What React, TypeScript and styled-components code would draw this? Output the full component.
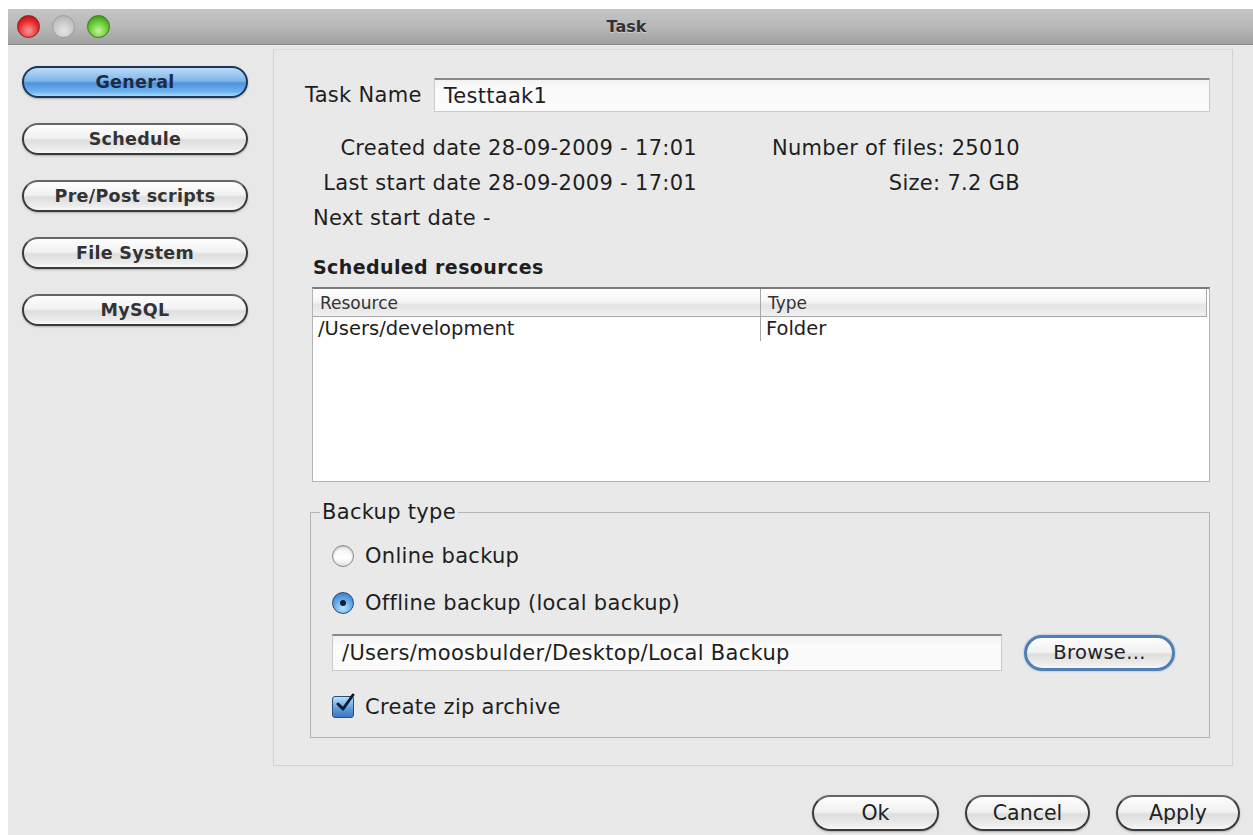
import React from "react"
import styled, {createGlobalStyle, css} from "styled-components";

const GlobalStyle = createGlobalStyle`
  html, body {
    margin: 0;
    padding: 0;
    background: #ffffff;
  }
  body {
    font-family: "DejaVu Sans", "Liberation Sans", sans-serif;
    color: #1e1e1e;
  }
`

const StyledPage = styled.div`
  width: 1253px;
  height: 835px;
  padding: 9px 0 0 8px;
  box-sizing: border-box;
  overflow: hidden;
`

const StyledWindow = styled.div`
  width: 1245px;
  height: 826px;
  display: flex;
  flex-direction: column;
  background: #e8e8e8;
`

const StyledTitleBar = styled.div`
  height: 35px;
  flex-shrink: 0;
  display: flex;
  align-items: center;
  background: linear-gradient(#c6c6c6, #b6b6b6 55%, #a0a0a0);
  border-bottom: 1px solid #8c8c8c;
  position: relative;
`

const StyledLights = styled.div`
  display: flex;
  gap: 12px;
  padding-left: 9px;
`

const StyledLight = styled.span<{color: "red" | "grey" | "green"}>`
  width: 23px;
  height: 23px;
  border-radius: 50%;
  box-sizing: border-box;
  ${({color}) => color === "red" && css`
    background: radial-gradient(circle at 50% 70%, #ff9a9a, #e8282a 55%, #a50d0f);
    border: 1px solid #8e1c1c;
  `}
  ${({color}) => color === "grey" && css`
    background: radial-gradient(circle at 50% 70%, #e6e6e6, #c6c6c6 55%, #a8a8a8);
    border: 1px solid #9e9e9e;
  `}
  ${({color}) => color === "green" && css`
    background: radial-gradient(circle at 50% 70%, #c6f59a, #5fc62a 55%, #2f7a0e);
    border: 1px solid #3a7a1c;
  `}
`

const StyledTitle = styled.div`
  position: absolute;
  inset: 0;
  display: flex;
  align-items: center;
  justify-content: center;
  padding-right: 8px;
  font-size: 16px;
  font-weight: bold;
  color: #333;
  text-shadow: 0 1px 0 rgba(255, 255, 255, 0.4);
  pointer-events: none;
`

const StyledBody = styled.div`
  flex: 1;
  display: flex;
`

const StyledSidebar = styled.div`
  width: 265px;
  flex-shrink: 0;
  display: flex;
  flex-direction: column;
  gap: 25px;
  padding: 21px 0 0 14px;
  box-sizing: border-box;
`

const pill = css`
  display: flex;
  align-items: center;
  justify-content: center;
  box-sizing: border-box;
  border-radius: 999px;
  border: 2px solid #3a3a3a;
  border-top-color: #666;
  background: linear-gradient(#fdfdfd, #f2f2f2 45%, #dedede 55%, #ececec 85%, #f8f8f8);
  box-shadow: 0 1px 2px rgba(0, 0, 0, 0.25);
  font-family: "DejaVu Sans", "Liberation Sans", sans-serif;
  color: #222;
  padding: 0;
`

const StyledNavButton = styled.button<{selected?: boolean}>`
  ${pill};
  width: 226px;
  height: 32px;
  font-size: 17.5px;
  font-weight: bold;
  color: #333;
  letter-spacing: 0.3px;
  ${({selected}) => selected && css`
    border-color: #1d3656;
    background: linear-gradient(#bcdcf8, #7fb6ea 45%, #4c93dc 55%, #6fb3f0 85%, #a9dcff);
    color: #1c2c44;
  `}
`

const StyledRight = styled.div`
  flex: 1;
  display: flex;
  flex-direction: column;
`

const StyledPanel = styled.div`
  margin-top: 4px;
  width: 960px;
  height: 717px;
  box-sizing: border-box;
  border: 1px solid #d2d2d2;
  border-top-color: #dadada;
  background: #e9e9e9;
  padding: 28px 22px 0 31px;
  display: flex;
  flex-direction: column;
  font-size: 21px;
  letter-spacing: 0.3px;
  line-height: 24px;
`

const StyledLabel = styled.span`
  white-space: nowrap;
`

const StyledNameRow = styled.div`
  display: flex;
  align-items: center;
  gap: 12px;
`

const StyledTextField = styled.div<{width?: number, height?: number}>`
  flex: 1;
  height: ${({height}) => height ?? 34}px;
  box-sizing: border-box;
  display: flex;
  align-items: center;
  padding-left: 9px;
  background: linear-gradient(#f2f2f2, #fbfbfb 30%, #fbfbfb);
  border: 1px solid #cacaca;
  border-top: 2px solid #8a8a8a;
  white-space: nowrap;
  ${({width}) => width !== undefined && css`
    flex: none;
    width: ${width}px;
  `}
`

const StyledInfo = styled.div`
  display: grid;
  grid-template-columns: 384px 323px;
  row-gap: 11px;
  margin-top: 24px;
  padding-left: 8px;
`

const StyledInfoCell = styled.div<{align?: "left" | "right"}>`
  text-align: ${({align}) => align ?? "right"};
  white-space: nowrap;
`

const StyledSectionTitle = styled.div`
  margin-top: 25px;
  padding-left: 8px;
  font-weight: bold;
  font-size: 19px;
  letter-spacing: 0.4px;
`

const StyledTable = styled.div`
  margin: 8px 0 0 7px;
  height: 195px;
  flex-shrink: 0;
  box-sizing: border-box;
  background: #ffffff;
  border: 1px solid #b4b4b4;
  border-top: 2px solid #7a7a7a;
  display: flex;
  flex-direction: column;
  letter-spacing: 0;
`

const StyledTableRow = styled.div<{header?: boolean}>`
  display: grid;
  grid-template-columns: 447px 1fr;
  ${({header}) => header ? css`
    height: 27px;
    font-size: 17px;
    background: linear-gradient(#ffffff, #f6f6f6 45%, #e4e4e4 60%, #f0f0f0);
    border-bottom: 1px solid #a8a8a8;
    border-right: 1px solid #a8a8a8;
    margin-right: 2px;
  ` : css`
    height: 22px;
    font-size: 19.5px;
  `}
`

const StyledTableCell = styled.div<{header?: boolean}>`
  display: flex;
  align-items: center;
  padding-left: 5px;
  white-space: nowrap;
  ${({header}) => header && css`
    padding-left: 7px;
    color: #333;
    & + & {
      border-left: 1px solid #a8a8a8;
    }
  `}
`

const StyledFieldset = styled.fieldset`
  margin: 18px 0 0 5px;
  height: 238px;
  flex-shrink: 0;
  box-sizing: border-box;
  border: 1px solid #b4b4b4;
  padding: 0 20px 0 21px;
  display: flex;
  flex-direction: column;
`

const StyledLegend = styled.legend`
  padding: 0 2px;
  margin-left: -12px;
  line-height: 24px;
`

const StyledOption = styled.div<{gapTop: number}>`
  display: flex;
  align-items: center;
  gap: 11px;
  height: 24px;
  margin-top: ${({gapTop}) => gapTop}px;
`

const StyledRadio = styled.span<{checked?: boolean}>`
  width: 22px;
  height: 22px;
  border-radius: 50%;
  box-sizing: border-box;
  display: flex;
  align-items: center;
  justify-content: center;
  border: 1px solid #8a8a8a;
  background: linear-gradient(#f0f0f0, #ffffff 60%, #e2e2e2);
  box-shadow: inset 0 1px 2px rgba(0, 0, 0, 0.25);
  ${({checked}) => checked && css`
    border-color: #2b4c78;
    background: radial-gradient(circle at 50% 75%, #b8e4ff, #5aa2e6 55%, #2f6db6);
    box-shadow: none;
    &::after {
      content: "";
      width: 6px;
      height: 6px;
      border-radius: 50%;
      background: #10203a;
    }
  `}
`

const StyledPathRow = styled.div`
  display: flex;
  align-items: center;
  gap: 22px;
  margin-top: 19px;
`

const StyledBrowse = styled.button`
  ${pill};
  width: 151px;
  height: 36px;
  font-size: 19.5px;
  border: 3px solid #4f7fb4;
  box-shadow: 0 0 2px rgba(60, 110, 180, 0.6);
  letter-spacing: 0.3px;
`

const StyledCheck = styled.span`
  width: 22px;
  height: 22px;
  box-sizing: border-box;
  border-radius: 3px;
  border: 1px solid #2b4c78;
  background: linear-gradient(#b8e0ff, #5e9fe0 55%, #3a78c0);
  position: relative;

  svg {
    position: absolute;
    left: 1px;
    top: -5px;
  }
`

const StyledFooter = styled.div`
  display: flex;
  justify-content: flex-end;
  gap: 26px;
  padding: 29px 13px 0 0;
`

const StyledFooterButton = styled.button<{width: number}>`
  ${pill};
  width: ${({width}) => width}px;
  height: 36px;
  font-size: 20.5px;
`

const navItems = ["General", "Schedule", "Pre/Post scripts", "File System", "MySQL"]

const App: React.FC = () => {
    return (
        <StyledPage>
            <GlobalStyle/>
            <StyledWindow>
                <StyledTitleBar>
                    <StyledLights>
                        <StyledLight color="red"/>
                        <StyledLight color="grey"/>
                        <StyledLight color="green"/>
                    </StyledLights>
                    <StyledTitle>Task</StyledTitle>
                </StyledTitleBar>
                <StyledBody>
                    <StyledSidebar>
                        {
                            navItems.map((item, index) => (
                                <StyledNavButton key={item} selected={index === 0}>
                                    {item}
                                </StyledNavButton>
                            ))
                        }
                    </StyledSidebar>
                    <StyledRight>
                        <StyledPanel>
                            <StyledNameRow>
                                <StyledLabel>Task Name</StyledLabel>
                                <StyledTextField>Testtaak1</StyledTextField>
                            </StyledNameRow>
                            <StyledInfo>
                                <StyledInfoCell>Created date 28-09-2009 - 17:01</StyledInfoCell>
                                <StyledInfoCell>Number of files: 25010</StyledInfoCell>
                                <StyledInfoCell>Last start date 28-09-2009 - 17:01</StyledInfoCell>
                                <StyledInfoCell>Size: 7.2 GB</StyledInfoCell>
                                <StyledInfoCell align="left">Next start date -</StyledInfoCell>
                            </StyledInfo>
                            <StyledSectionTitle>Scheduled resources</StyledSectionTitle>
                            <StyledTable>
                                <StyledTableRow header>
                                    <StyledTableCell header>Resource</StyledTableCell>
                                    <StyledTableCell header>Type</StyledTableCell>
                                </StyledTableRow>
                                <StyledTableRow>
                                    <StyledTableCell>/Users/development</StyledTableCell>
                                    <StyledTableCell>Folder</StyledTableCell>
                                </StyledTableRow>
                            </StyledTable>
                            <StyledFieldset>
                                <StyledLegend>Backup type</StyledLegend>
                                <StyledOption gapTop={20}>
                                    <StyledRadio/>
                                    Online backup
                                </StyledOption>
                                <StyledOption gapTop={23}>
                                    <StyledRadio checked/>
                                    Offline backup (local backup)
                                </StyledOption>
                                <StyledPathRow>
                                    <StyledTextField width={670} height={37}>
                                        /Users/moosbulder/Desktop/Local Backup
                                    </StyledTextField>
                                    <StyledBrowse>Browse...</StyledBrowse>
                                </StyledPathRow>
                                <StyledOption gapTop={24}>
                                    <StyledCheck>
                                        <svg width="22" height="22" viewBox="0 0 22 22">
                                            <path d="M4 12 L9 17 L19 3" fill="none" stroke="#0e1a30" strokeWidth="3"
                                                  strokeLinecap="round" strokeLinejoin="round"/>
                                        </svg>
                                    </StyledCheck>
                                    Create zip archive
                                </StyledOption>
                            </StyledFieldset>
                        </StyledPanel>
                        <StyledFooter>
                            <StyledFooterButton width={127}>Ok</StyledFooterButton>
                            <StyledFooterButton width={125}>Cancel</StyledFooterButton>
                            <StyledFooterButton width={124}>Apply</StyledFooterButton>
                        </StyledFooter>
                    </StyledRight>
                </StyledBody>
            </StyledWindow>
        </StyledPage>
    )
}

export default App
